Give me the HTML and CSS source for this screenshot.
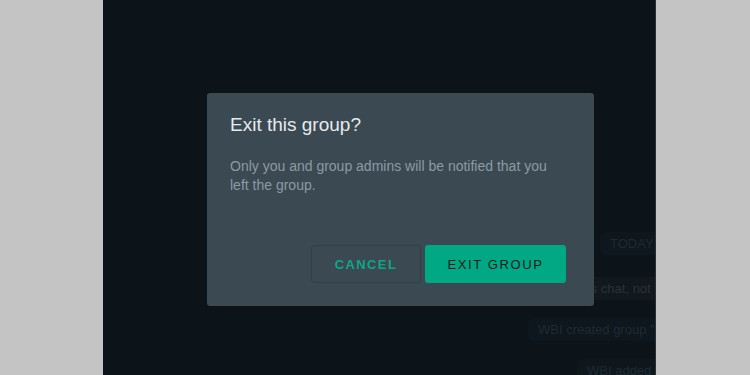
FILE: index.html
```html
<!DOCTYPE html>
<html>
<head>
<meta charset="utf-8">
<link rel="stylesheet" href="styles.css">
</head>
<body>
<div class="page">
  <div class="app">
    <div class="chat">
      <div class="row r1"><span class="pill">TODAY</span></div>
      <div class="row r2"><span class="pill">this chat, not</span></div>
      <div class="row r3"><span class="pill">WBI created group "</span></div>
      <div class="row r4"><span class="pill">WBI added</span></div>
    </div>
    <div class="dialog">
      <h1 class="title">Exit this group?</h1>
      <p class="body">Only you and group admins will be notified that you left the group.</p>
      <div class="actions">
        <button class="btn cancel">CANCEL</button>
        <button class="btn exit">EXIT GROUP</button>
      </div>
    </div>
  </div>
</div>
</body>
</html>
```
FILE: styles.css
```css
html, body {
  margin: 0;
  padding: 0;
}
body {
  background: #c4c4c4;
  font-family: "Liberation Sans", Roboto, sans-serif;
  width: 750px;
  height: 375px;
  overflow: hidden;
}
.page {
  display: flex;
  height: 375px;
}
.app {
  margin-left: 103px;
  width: 552px;
  height: 375px;
  background: #0c141a;
  position: relative;
  overflow: hidden;
  border-right: 1px solid #2a3034;
}
.chat {
  display: flex;
  flex-direction: column;
  align-items: flex-start;
  padding-top: 232px;
  gap: 19px;
}
.row {
  display: flex;
  white-space: nowrap;
}
.r1 { margin-left: 497px; }
.r2 { margin-left: 464px; margin-top: 3px; }
.r3 { margin-left: 425px; margin-top: -1px; }
.r4 { margin-left: 474px; margin-top: -1px; }
.pill {
  font-size: 13px;
  line-height: 15px;
  color: #1f2a31;
  background: #0e171d;
  padding: 4px 10px;
  border-radius: 6px;
}
.r2 .pill {
  color: #2a3237;
  background: #11191e;
}
.dialog {
  position: absolute;
  left: 104px;
  top: 93px;
  width: 387px;
  height: 213px;
  box-sizing: border-box;
  background: #3b4953;
  border-radius: 3px;
  padding: 20px 28px 23px 23px;
  display: flex;
  flex-direction: column;
}
.title {
  margin: 0;
  font-size: 19px;
  font-weight: normal;
  color: #e6eaec;
  line-height: 24px;
}
.body {
  margin: 20px 0 0 0;
  font-size: 14px;
  line-height: 19px;
  color: #8d9aa2;
}
.actions {
  margin-top: auto;
  display: flex;
  justify-content: flex-end;
  gap: 4px;
}
.btn {
  font-family: "Liberation Sans", Roboto, sans-serif;
  font-size: 13px;
  letter-spacing: 1.6px;
  height: 38px;
  border-radius: 3px;
  cursor: pointer;
}
.cancel {
  width: 110px;
  background: transparent;
  border: 1px solid #323f48;
  color: #0ea585;
  font-weight: bold;
  letter-spacing: 1.4px;
}
.exit {
  width: 141px;
  background: #00a884;
  border: none;
  color: #0f1b20;
}
```
